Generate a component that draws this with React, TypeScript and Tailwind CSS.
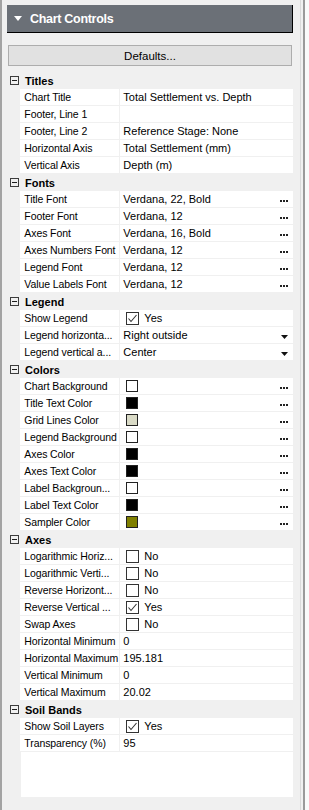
import React from 'react';

type Row = {
  label: string;
  value?: string;
  kind?: 'text' | 'font' | 'drop' | 'check' | 'color';
  checked?: boolean;
  color?: string;
};

interface Section {
  title: string;
  rows: Row[];
}

const sections: Section[] = [
  {
    title: 'Titles',
    rows: [
      { label: 'Chart Title', value: 'Total Settlement vs. Depth' },
      { label: 'Footer, Line 1', value: '' },
      { label: 'Footer, Line 2', value: 'Reference Stage: None' },
      { label: 'Horizontal Axis', value: 'Total Settlement (mm)' },
      { label: 'Vertical Axis', value: 'Depth (m)' },
    ],
  },
  {
    title: 'Fonts',
    rows: [
      { label: 'Title Font', value: 'Verdana, 22, Bold', kind: 'font' },
      { label: 'Footer Font', value: 'Verdana, 12', kind: 'font' },
      { label: 'Axes Font', value: 'Verdana, 16, Bold', kind: 'font' },
      { label: 'Axes Numbers Font', value: 'Verdana, 12', kind: 'font' },
      { label: 'Legend Font', value: 'Verdana, 12', kind: 'font' },
      { label: 'Value Labels Font', value: 'Verdana, 12', kind: 'font' },
    ],
  },
  {
    title: 'Legend',
    rows: [
      { label: 'Show Legend', value: 'Yes', kind: 'check', checked: true },
      { label: 'Legend horizonta...', value: 'Right outside', kind: 'drop' },
      { label: 'Legend vertical a...', value: 'Center', kind: 'drop' },
    ],
  },
  {
    title: 'Colors',
    rows: [
      { label: 'Chart Background', kind: 'color', color: '#ffffff' },
      { label: 'Title Text Color', kind: 'color', color: '#000000' },
      { label: 'Grid Lines Color', kind: 'color', color: '#d9dac6' },
      { label: 'Legend Background', kind: 'color', color: '#ffffff' },
      { label: 'Axes Color', kind: 'color', color: '#000000' },
      { label: 'Axes Text Color', kind: 'color', color: '#000000' },
      { label: 'Label Backgroun...', kind: 'color', color: '#ffffff' },
      { label: 'Label Text Color', kind: 'color', color: '#000000' },
      { label: 'Sampler Color', kind: 'color', color: '#808000' },
    ],
  },
  {
    title: 'Axes',
    rows: [
      { label: 'Logarithmic Horiz...', value: 'No', kind: 'check' },
      { label: 'Logarithmic Verti...', value: 'No', kind: 'check' },
      { label: 'Reverse Horizont...', value: 'No', kind: 'check' },
      { label: 'Reverse Vertical ...', value: 'Yes', kind: 'check', checked: true },
      { label: 'Swap Axes', value: 'No', kind: 'check' },
      { label: 'Horizontal Minimum', value: '0' },
      { label: 'Horizontal Maximum', value: '195.181' },
      { label: 'Vertical Minimum', value: '0' },
      { label: 'Vertical Maximum', value: '20.02' },
    ],
  },
  {
    title: 'Soil Bands',
    rows: [
      { label: 'Show Soil Layers', value: 'Yes', kind: 'check', checked: true },
      { label: 'Transparency (%)', value: '95' },
    ],
  },
];

const MinusBox = () => (
  <svg width="9" height="9" viewBox="0 0 9 9">
    <rect x="0.5" y="0.5" width="8" height="8" fill="none" stroke="#3c3c3c" />
    <line x1="2" y1="4.5" x2="7" y2="4.5" stroke="#1e1e1e" />
  </svg>
);

const CheckBox = ({ checked }: { checked?: boolean }) => (
  <svg width="13" height="13" viewBox="0 0 13 13" className="shrink-0">
    <rect x="0.5" y="0.5" width="12" height="12" fill="#fff" stroke="#333" />
    {checked && <path d="M2.5 6.5 L5 9.5 L10.5 3" fill="none" stroke="#333" strokeWidth="1.1" />}
  </svg>
);

const Ellipsis = () => (
  <div className="ml-auto mr-[5px] mt-[4px] flex gap-px">
    <span className="h-[2px] w-[2px] bg-[#222]" />
    <span className="h-[2px] w-[2px] bg-[#222]" />
    <span className="h-[2px] w-[2px] bg-[#222]" />
  </div>
);

const DropArrow = () => (
  <svg width="7" height="4" viewBox="0 0 7 4" className="ml-auto mr-[5px] mt-[3px]">
    <polygon points="0,0 7,0 3.5,4" fill="#111" />
  </svg>
);

const Value = ({ row }: { row: Row }) => {
  if (row.kind === 'check') {
    return (
      <div className="flex h-full flex-1 items-center bg-white pl-[6px]">
        <CheckBox checked={row.checked} />
        <span className="ml-[5px]">{row.value}</span>
      </div>
    );
  }
  if (row.kind === 'color') {
    return (
      <div className="flex h-full flex-1 items-center bg-white pl-[6px]">
        <span className="h-[12px] w-[12px] border border-[#222]" style={{ backgroundColor: row.color }} />
        <Ellipsis />
      </div>
    );
  }
  return (
    <div className="flex h-full flex-1 items-center bg-white pl-[3px]">
      <span className="whitespace-nowrap">{row.value}</span>
      {row.kind === 'font' && <Ellipsis />}
      {row.kind === 'drop' && <DropArrow />}
    </div>
  );
};

const PropertyGrid = () => (
  <div className="mt-[6px] flex flex-1 flex-col">
    {sections.map((section) => (
      <div key={section.title}>
        <div className="flex h-[17px] items-center">
          <div className="flex w-[14px] justify-center pl-px">
            <MinusBox />
          </div>
          <span className="pl-[4px] font-bold">{section.title}</span>
        </div>
        {section.rows.map((row) => (
          <div key={row.label} className="flex h-[17px]">
            <div className="w-[14px]" />
            <div className="flex h-[16px] w-full">
              <div className="h-full w-[99px] shrink-0 overflow-hidden whitespace-nowrap bg-white pl-[4px] text-[10.5px] tracking-[-0.1px]">
                {row.label}
              </div>
              <div className="w-px" />
              <Value row={row} />
            </div>
          </div>
        ))}
      </div>
    ))}
    <div className="flex flex-1">
      <div className="w-[14px]" />
      <div className="flex-1 bg-white" />
    </div>
  </div>
);

export default function App() {
  return (
    <div className="flex h-[810px] w-[309px] border-l-2 border-[#a3a3a3] bg-[#f0f0f0] font-['Liberation_Sans',Arial,sans-serif] text-[11px] leading-[16px] text-black">
      <div className="flex flex-1 flex-col pl-[5px]">
        <div className="mt-[5px] flex h-[28px] items-center border-b border-r border-black bg-[#6b7077] pl-[7px] text-white">
          <svg width="8" height="5" viewBox="0 0 8 5">
            <polygon points="0,0 8,0 4,5" fill="#fff" />
          </svg>
          <span className="ml-[8px] text-[12.5px] font-bold tracking-[-0.3px]">Chart Controls</span>
        </div>
        <button className="mx-px mt-[12px] h-[21px] border border-[#adadad] bg-[#e1e1e1] text-[11.5px]">Defaults...</button>
        <PropertyGrid />
        <div className="h-[13px]" />
      </div>
      <div className="flex w-[16px]">
        <div className="w-[7px]" />
        <div className="w-px bg-[#dadada]" />
        <div className="w-[2px]" />
        <div className="w-[2px] bg-[#9a9a9a]" />
        <div className="flex-1 bg-[#fafafa]" />
      </div>
    </div>
  );
}
